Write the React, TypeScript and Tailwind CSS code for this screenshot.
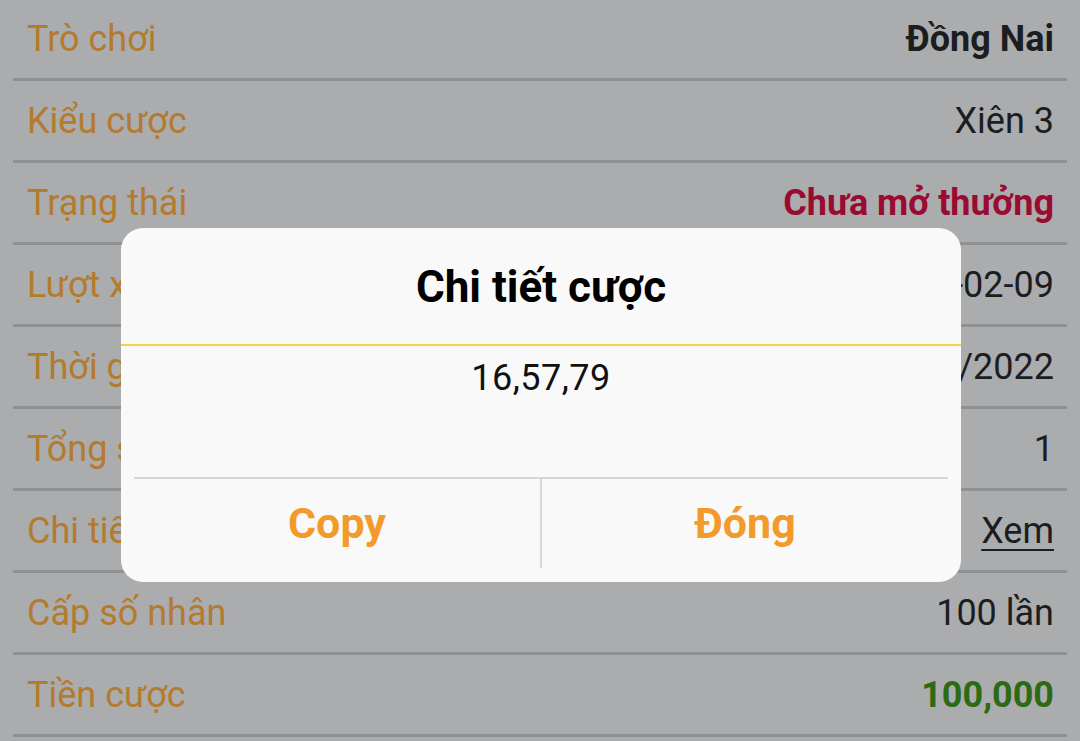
import { ReactNode } from 'react'

type Row = {
  label: string
  value: ReactNode
}

const rows: Row[] = [
  { label: 'Trò chơi', value: <span className="font-bold text-[#1c1d1f]">Đồng Nai</span> },
  { label: 'Kiểu cược', value: <span className="text-[#1c1d1f]">Xiên 3</span> },
  { label: 'Trạng thái', value: <span className="font-bold text-[#9a0a31]">Chưa mở thưởng</span> },
  { label: 'Lượt xổ', value: <span className="text-[#1c1d1f]">2022-02-09</span> },
  { label: 'Thời gian', value: <span className="text-[#1c1d1f]">09/02/2022</span> },
  { label: 'Tổng số', value: <span className="text-[#1c1d1f]">1</span> },
  { label: 'Chi tiết', value: <span className="text-[#1c1d1f] underline underline-offset-[6px] decoration-2">Xem</span> },
  { label: 'Cấp số nhân', value: <span className="text-[#1c1d1f]">100 lần</span> },
  { label: 'Tiền cược', value: <span className="font-bold text-[#2c6a13]">100,000</span> },
]

export default function App() {
  return (
    <div className="relative h-[741px] w-[1080px] overflow-hidden bg-[#abacae] font-['Roboto','Noto_Sans',sans-serif]">
      {/* Bet info list (dimmed behind the dialog) */}
      <div className="-mt-[1px] mx-[13px]">
        {rows.map((r) => (
          <div
            key={r.label}
            className="flex h-[82px] items-center justify-between border-b-[3px] border-[#909193] pl-[14px] pr-[13px] text-[36px]"
          >
            <span className="text-[#b47a2d]">{r.label}</span>
            {r.value}
          </div>
        ))}
      </div>

      {/* Dialog */}
      <div className="absolute left-[121px] top-[228px] flex h-[354px] w-[840px] flex-col rounded-[22px] bg-[#f9f9f9]">
        <div className="flex h-[116px] items-center justify-center pt-[2px] text-[44px] font-bold text-black">
          Chi tiết cược
        </div>
        <div className="h-[2px] bg-[#f4d34a]" />
        <div className="flex h-[131px] justify-center pt-[5px] text-[36px] tracking-[0.5px] text-[#111]">
          16,57,79
        </div>
        <div className="mx-[13px] flex h-[91px] border-t-2 border-[#d6d6d6]">
          <button className="flex flex-1 items-center justify-center text-[43px] font-bold text-[#f39a2c]">
            Copy
          </button>
          <div className="w-[2px] bg-[#d6d6d6]" />
          <button className="flex flex-1 items-center justify-center text-[43px] font-bold text-[#f39a2c]">
            Đóng
          </button>
        </div>
      </div>
    </div>
  )
}
